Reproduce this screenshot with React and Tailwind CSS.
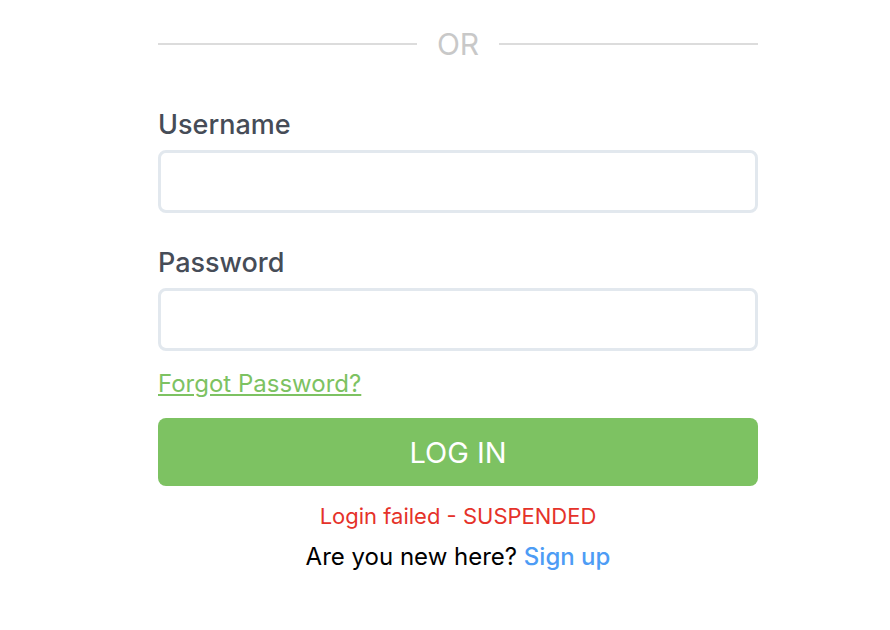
export default function App() {
  return (
    <div
      className="min-h-screen bg-white pl-[158px]"
      style={{ fontFamily: "Inter, 'Noto Sans', sans-serif" }}
    >
      <div className="w-[600px] flex flex-col pt-[27px]">
        {/* divider */}
        <div className="flex items-center gap-5 h-[34px]">
          <div className="flex-1 h-[2px] bg-[#dcdcdc]" />
          <span className="text-[30px] text-[#c8c8c8] leading-none">OR</span>
          <div className="flex-1 h-[2px] bg-[#dcdcdc]" />
        </div>

        {/* username */}
        <label className="mt-[48px] text-[27px] font-medium text-[#464c57] leading-[32px]">
          Username
        </label>
        <input
          type="text"
          className="mt-[9px] h-[63px] w-full rounded-[8px] border-[3px] border-[#e2e8ee] outline-none px-4 text-[22px]"
        />

        {/* password */}
        <label className="mt-[34px] text-[27px] font-medium text-[#464c57] leading-[32px]">
          Password
        </label>
        <input
          type="password"
          className="mt-[9px] h-[63px] w-full rounded-[8px] border-[3px] border-[#e2e8ee] outline-none px-4 text-[22px]"
        />

        <a
          href="#"
          className="mt-[18px] self-start text-[24px] text-[#7dc262] underline leading-[30px]"
        >
          Forgot Password?
        </a>

        <button className="mt-[19px] h-[68px] w-full rounded-[8px] bg-[#7dc262] text-white text-[29px] leading-none">
          LOG IN
        </button>

        <p className="mt-[16px] text-center text-[22px] text-[#e5322a] leading-[28px]">
          Login failed - SUSPENDED
        </p>
        <p className="mt-[12px] text-center text-[24px] text-black leading-[30px]">
          Are you new here?{" "}
          <a href="#" className="text-[#4d9cf5] font-medium">
            Sign up
          </a>
        </p>
      </div>
    </div>
  );
}
